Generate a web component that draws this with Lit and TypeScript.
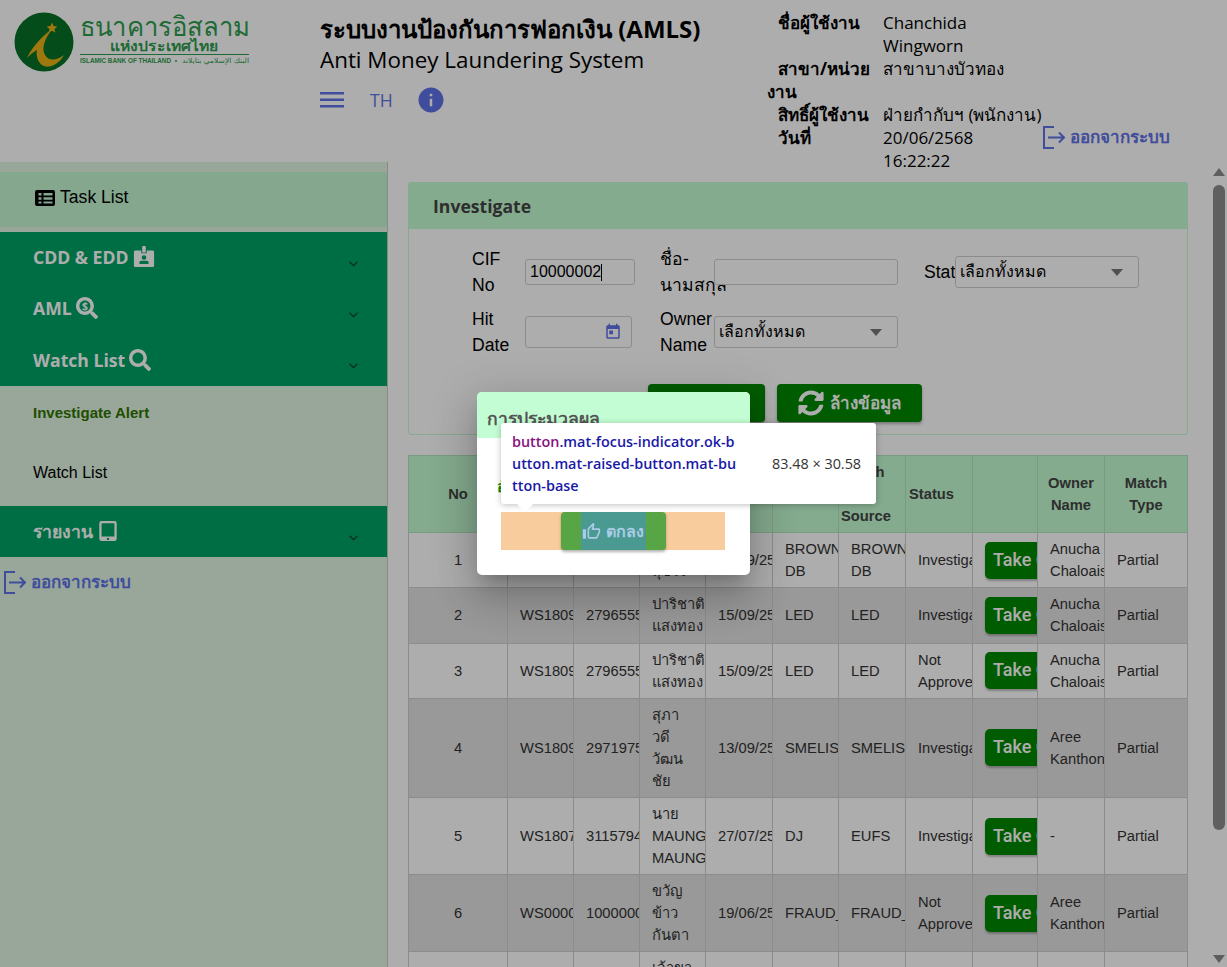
import { LitElement, html, css, svg } from "lit";
import { customElement } from "lit/decorators.js";

const searchPath = "M505 442.7L405.3 343c-4.5-4.5-10.6-7-17-7H372c27.6-35.3 44-79.7 44-128C416 93.1 322.9 0 208 0S0 93.1 0 208s93.1 208 208 208c48.3 0 92.7-16.4 128-44v16.3c0 6.4 2.5 12.5 7 17l99.7 99.7c9.4 9.4 24.6 9.4 33.9 0l28.3-28.3c9.4-9.4 9.4-24.6.1-34zM208 336c-70.7 0-128-57.2-128-128 0-70.7 57.2-128 128-128 70.7 0 128 57.2 128 128 0 70.7-57.2 128-128 128z";
const syncPath = "M370.72 133.28C339.458 104.008 298.888 87.962 255.848 88c-77.458.068-144.328 53.178-162.791 126.85-1.344 5.363-6.122 9.15-11.651 9.15H24.103c-7.498 0-13.194-6.807-11.807-14.176C33.933 94.924 134.813 8 256 8c66.448 0 126.791 26.136 171.315 68.685L463.03 40.97C478.149 25.851 504 36.559 504 57.941V192c0 13.255-10.745 24-24 24H345.941c-21.382 0-32.09-25.851-16.971-40.971l41.75-41.749zM32 296h134.059c21.382 0 32.09 25.851 16.971 40.971l-41.75 41.75c31.262 29.273 71.835 45.319 114.876 45.28 77.418-.07 144.315-53.144 162.787-126.849 1.344-5.363 6.122-9.15 11.651-9.15h57.304c7.498 0 13.194 6.807 11.807 14.176C478.067 417.076 377.187 504 256 504c-66.448 0-126.791-26.136-171.315-68.685L48.97 471.03C33.851 486.149 8 475.441 8 454.059V320c0-13.255 10.745-24 24-24z";

const logoutIcon = html`<svg class="logout-icon" viewBox="0 0 24 24" fill="none" stroke="currentColor" stroke-width="2">
  <path d="M12 2H2v21h10" />
  <path d="M6 12.5h16M17 7.5l5 5-5 5" />
</svg>`;

const chevron = html`<svg class="chevron" viewBox="0 0 8 5" fill="none" stroke="#1c3d1c" stroke-width="1"><path d="M.5.5 4 4 7.5.5" /></svg>`;

interface Row {
  no: string;
  alert: string;
  cif: string;
  name: string[];
  date: string;
  list: string[];
  source: string[];
  status: string[];
  owner: string[];
}

const rows: Row[] = [
  { no: "1", alert: "WS18090001", cif: "2796555001", name: ["ปาริชาติ", "สุขใจ"], date: "15/09/2568", list: ["BROWN", "DB"], source: ["BROWN", "DB"], status: ["Investigate"], owner: ["Anucha", "Chaloaisin"] },
  { no: "2", alert: "WS18090002", cif: "2796555001", name: ["ปาริชาติ", "แสงทอง"], date: "15/09/2568", list: ["LED"], source: ["LED"], status: ["Investigate"], owner: ["Anucha", "Chaloaisin"] },
  { no: "3", alert: "WS18090003", cif: "2796555001", name: ["ปาริชาติ", "แสงทอง"], date: "15/09/2568", list: ["LED"], source: ["LED"], status: ["Not", "Approved"], owner: ["Anucha", "Chaloaisin"] },
  { no: "4", alert: "WS18090004", cif: "2971975001", name: ["สุภา", "วดี", "วัฒน", "ชัย"], date: "13/09/2568", list: ["SMELIST"], source: ["SMELIST"], status: ["Investigate"], owner: ["Aree", "Kanthong"] },
  { no: "5", alert: "WS18070005", cif: "3115794001", name: ["นาย", "MAUNG", "MAUNG"], date: "27/07/2568", list: ["DJ"], source: ["EUFS"], status: ["Investigate"], owner: ["-"] },
  { no: "6", alert: "WS00000006", cif: "1000000201", name: ["ขวัญ", "ข้าว", "กันตา"], date: "19/06/2568", list: ["FRAUD_LIST"], source: ["FRAUD_LIST"], status: ["Not", "Approved"], owner: ["Aree", "Kanthong"] },
  { no: "7", alert: "WS00000007", cif: "1000000301", name: ["เจ้าขา", "ใจดี", "มาก"], date: "19/06/2568", list: ["UR", "DB"], source: ["UR", "DB"], status: ["Investigate"], owner: ["Aree", "Kanthong"] },
];

const colWidths = [99, 66, 66, 66, 67, 66, 67, 67, 65, 67, 83];

@customElement("app-root")
export class AppRoot extends LitElement {
  static styles = css`
    :host {
      display: block;
      position: relative;
      width: 1227px;
      height: 967px;
      overflow: hidden;
      background: #fff;
      color: #000;
      font-family: "Liberation Sans", "Noto Sans", sans-serif;
      font-size: 14.72px;
    }
    * { box-sizing: border-box; }

    /* header */
    .top {
      display: grid;
      grid-template-columns: 306px 447px 275px 1fr;
      height: 162px;
      padding-left: 14px;
    }
    .logo { display: block; margin-top: 11px; }
    .title-box { padding-top: 10px; }
    .title { font: 700 24px/38px "Open Sans", "Noto Sans", sans-serif; white-space: nowrap; }
    .subtitle { font: 400 22.4px/28px "Open Sans", "Noto Sans", sans-serif; white-space: nowrap; margin-top: -2px; }
    .tools { display: flex; align-items: center; margin-top: 11px; color: #5f72e6; }
    .tools .burger { width: 24px; height: 16px; margin-right: 26px; }
    .tools .lang { font: 400 17.6px/26px "Open Sans", sans-serif; width: 49px; }
    .tools .info { width: 30px; height: 30px; margin-left: -3px; }
    .user {
      display: grid;
      grid-template-columns: 116px 1fr;
      align-content: start;
      padding-top: 11px;
      font: 400 17px/23px "Open Sans", "Noto Sans", sans-serif;
    }
    .user b { font-weight: 700; text-indent: 11px; }
    .logout {
      display: flex;
      align-items: center;
      gap: 4px;
      color: #5f72e6;
      font: 600 17px/24px "Open Sans", "Noto Sans", sans-serif;
      white-space: nowrap;
    }
    .top .logout { align-self: end; margin-bottom: 23px; }
    .logout-icon { width: 24px; height: 24px; flex: none; }

    /* side menu + main */
    .body { display: flex; height: 805px; }
    .side {
      width: 388px;
      flex: none;
      padding-top: 10px;
      background: #e0f7e4;
      border-right: 1px solid #c4cfc6;
    }
    .task {
      display: flex;
      align-items: center;
      gap: 5px;
      height: 55px;
      margin-bottom: 5px;
      padding: 0 0 4px 35px;
      background: #c3f7d1;
      font-size: 17.6px;
    }
    .task svg { width: 20px; height: 18px; }
    .menu {
      display: flex;
      align-items: center;
      height: 51.3px;
      padding: 0 29px 0 33px;
      background: #00a365;
      color: #fff;
      font: 700 17.6px/24px "Open Sans", "Noto Sans", sans-serif;
    }
    .menu .label { display: flex; align-items: center; gap: 4px; margin-top: -1px; }
    .menu .label svg { display: block; height: 22px; width: 22px; fill: currentColor; }
    .chevron { width: 9px; height: 6px; margin-left: auto; margin-top: 12px; }
    .sub {
      display: flex;
      align-items: center;
      height: 60px;
      padding: 0 33px 6px;
      font-size: 16px;
    }
    .sub.active { font-size: 15px; font-weight: 700; color: #327300; }
    .side .logout { padding: 13px 0 0 3px; }

    .main { flex: 1; display: flex; overflow: hidden; padding-left: 20px; }
    .content { width: 780px; flex: none; padding-top: 20px; }
    .rail {
      width: 17px;
      margin-left: 22px;
      flex: none;
      display: flex;
      flex-direction: column;
      align-items: center;
      padding: 6px 0 4px;
    }
    .rail .up, .rail .down { width: 0; height: 0; border: 6px solid transparent; flex: none; }
    .rail .up { border-top: 0; border-bottom: 8px solid #8b8b8b; }
    .rail .down { border-bottom: 0; border-top: 8px solid #8b8b8b; margin-top: auto; }
    .rail .thumb { width: 12px; height: 645px; margin-top: 9px; border-radius: 6px; background: #8c8c8c; }

    /* search card */
    .card { height: 253px; border: 1px solid #c3fcd1; border-radius: 3px; }
    .card-head {
      height: 46px;
      padding-left: 24px;
      background: #c3fcd1;
      color: #444;
      font: 700 17.6px/46px "Open Sans", "Noto Sans", sans-serif;
    }
    .form {
      display: grid;
      grid-template-columns: 53px 135px 54px 210px 31px 184px;
      grid-auto-rows: 52px;
      row-gap: 8px;
      align-items: center;
      margin-top: 17px;
      padding-left: 63px;
      font-size: 17.6px;
      line-height: 26.4px;
    }
    .form label { white-space: nowrap; }
    .field {
      position: relative;
      display: flex;
      align-items: center;
      padding: 0 4px;
      border: 1px solid #cfcfcf;
      border-radius: 3px;
      background: #fff;
      font-size: 16px;
      white-space: nowrap;
    }
    .field.short { height: 26px; }
    .field.tall { height: 32px; }
    .w110 { width: 110px; }
    .w107 { width: 107px; }
    .w184 { width: 184px; }
    .caret { width: 1px; height: 17px; background: #000; }
    .arrow {
      margin-left: auto;
      margin-right: 11px;
      width: 0;
      height: 0;
      border: 6px solid transparent;
      border-bottom: 0;
      border-top: 7px solid #777;
    }
    .date { margin-left: auto; margin-right: 5px; width: 18px; height: 18px; fill: #5f72e6; }
    .actions { display: flex; justify-content: flex-start; gap: 12px; margin-top: 26px; padding-left: 239px; }
    .btn {
      display: flex;
      align-items: center;
      justify-content: center;
      gap: 6px;
      height: 38px;
      border-radius: 4px;
      background: #008800;
      color: #fff;
      font: 700 17px/24px "Open Sans", "Noto Sans", sans-serif;
      box-shadow: 0 2px 3px rgba(0, 0, 0, .3);
    }
    .btn svg { width: 26px; height: 26px; fill: currentColor; }
    .btn.search { width: 117px; }
    .btn.clear { width: 145px; }

    /* table */
    table {
      table-layout: fixed;
      width: 780px;
      margin-top: 20px;
      border-collapse: collapse;
      line-height: 22.08px;
      color: #333;
    }
    th, td { border: 1px solid #cfcfcf; overflow: hidden; padding: 5px 0 5px 12px; text-align: left; white-space: nowrap; }
    th { background: #c3fcd1; font-weight: 700; color: #444; border-color: #b4e4c0; }
    th.mid, td.mid { text-align: center; padding-left: 0; }
    tbody tr:nth-child(even) td { background: #e2e2e2; }
    .take {
      display: inline-block;
      vertical-align: middle;
      height: 37px;
      padding: 0 8px;
      border-radius: 5px;
      background: #008800;
      color: #fff;
      font: 500 18px/36px Roboto, sans-serif;
      box-shadow: 0 2px 2px rgba(0, 0, 0, .25);
    }

    /* dim layer, dialog and inspector tooltip */
    .dim { position: absolute; inset: 0; background: rgba(0, 0, 0, .32); }
    .dialog {
      position: absolute;
      left: 477px;
      top: 392px;
      width: 273px;
      height: 183px;
      overflow: hidden;
      border-radius: 5px;
      background: #fff;
      box-shadow: 0 11px 15px -7px rgba(0, 0, 0, .2), 0 24px 38px 3px rgba(0, 0, 0, .14), 0 9px 46px 8px rgba(0, 0, 0, .12);
    }
    .dialog-head {
      height: 46px;
      padding-left: 10px;
      background: #c3fdd3;
      color: #555;
      font: 700 17.6px/52px "Open Sans", "Noto Sans", sans-serif;
    }
    .dialog-text { height: 74px; padding: 36px 0 0 20px; color: #0a8a0a; font: 700 16px/24px "Open Sans", "Noto Sans", sans-serif; white-space: nowrap; }
    .dialog-band { display: flex; justify-content: center; width: 224px; height: 38px; margin-left: 24px; background: #f9cc9d; }
    .ok {
      display: flex;
      align-items: center;
      justify-content: center;
      width: 105px;
      height: 38px;
      border-radius: 4px;
      background: #57a545;
      box-shadow: 0 2px 3px rgba(0, 0, 0, .3);
    }
    .ok-inner {
      display: flex;
      align-items: center;
      justify-content: center;
      gap: 5px;
      width: 65px;
      height: 38px;
      background: #4b9a92;
      color: #a9cde6;
      font: 600 16px/24px "Open Sans", "Noto Sans", sans-serif;
      white-space: nowrap;
    }
    .ok-inner svg { width: 19px; height: 19px; flex: none; fill: currentColor; }
    .tip {
      position: absolute;
      left: 501px;
      top: 423px;
      display: flex;
      align-items: center;
      width: 375px;
      height: 81px;
      padding: 0 11px;
      border-radius: 3px;
      background: #fff;
      box-shadow: 0 1px 6px rgba(0, 0, 0, .25);
      font: 600 14.4px/22px "Open Sans", sans-serif;
      color: #1a1aa6;
    }
    .tip-name { width: 260px; flex: none; white-space: nowrap; }
    .tip-name i { font-style: normal; color: #881280; }
    .tip-size { color: #333; font-weight: 400; white-space: nowrap; }
    .tip::after {
      content: "";
      position: absolute;
      left: 15px;
      bottom: -8px;
      width: 0;
      height: 0;
      border: 9px solid transparent;
      border-bottom: 0;
      border-top: 9px solid #fff;
    }
  `;

  private logo() {
    return svg`<svg class="logo" width="240" height="62" viewBox="0 0 240 62">
      <circle cx="30" cy="31" r="29.5" fill="#077125" />
      <path d="M39 17C29 25 19 34 13 47 18 42 21 40 23 39 21 49 28 60 40 54 46 51 48 47 50 44 44 49 35 51 31 44 27 37 31 27 39 17Z" fill="#e9b117" />
      <path d="M38 11.500l1.600 3.500 3.700.4-2.800 2.500.8 3.700-3.300-1.900-3.300 1.900.8-3.700-2.800-2.500 3.700-.4z" fill="#e9b117" />
      <text x="66" y="25" textLength="170" lengthAdjust="spacingAndGlyphs" font-size="27" font-weight="500" fill="#2e9c4e" font-family="Noto Sans, sans-serif">ธนาคารอิสลาม</text>
      <text x="96" y="40" textLength="108" lengthAdjust="spacingAndGlyphs" font-size="14" font-weight="700" fill="#2e9c4e" font-family="Noto Sans, sans-serif">แห่งประเทศไทย</text>
      <path d="M66 43.500h169" stroke="#2e9c4e" stroke-width="1" />
      <text x="66" y="52" textLength="91" lengthAdjust="spacingAndGlyphs" font-size="7" font-weight="700" fill="#2e9c4e" font-family="Liberation Sans, sans-serif">ISLAMIC BANK OF THAILAND</text>
      <circle cx="162" cy="50" r="1" fill="#2e9c4e" />
      <text x="168" y="52" textLength="67" lengthAdjust="spacingAndGlyphs" font-size="7" fill="#2e9c4e" font-family="DejaVu Sans, sans-serif">البنك الإسلامي بتايلاند</text>
    </svg>`;
  }

  private lines(parts: string[]) {
    return parts.map((p, i) => html`${i ? html`<br />` : ""}${p}`);
  }

  render() {
    return html`
      <div class="top">
        ${this.logo()}
        <div class="title-box">
          <div class="title">ระบบงานป้องกันการฟอกเงิน (AMLS)</div>
          <div class="subtitle">Anti Money Laundering System</div>
          <div class="tools">
            <svg class="burger" viewBox="0 0 24 16" fill="currentColor"><rect width="24" height="2.500" /><rect y="6.500" width="24" height="2.500" /><rect y="13" width="24" height="2.500" /></svg>
            <span class="lang">TH</span>
            <svg class="info" viewBox="0 0 24 24" fill="currentColor"><path d="M12 2C6.480 2 2 6.480 2 12s4.480 10 10 10 10-4.480 10-10S17.520 2 12 2zm1 15h-2v-6h2v6zm0-8h-2V7h2v2z" /></svg>
          </div>
        </div>
        <div class="user">
          <b>ชื่อผู้ใช้งาน</b><span>Chanchida Wingworn</span>
          <b>สาขา/หน่วยงาน</b><span>สาขาบางบัวทอง</span>
          <b>สิทธิ์ผู้ใช้งาน</b><span>ฝ่ายกำกับฯ (พนักงาน)</span>
          <b>วันที่</b><span>20/06/2568<br />16:22:22</span>
        </div>
        <div class="logout">${logoutIcon}ออกจากระบบ</div>
      </div>

      <div class="body">
        <nav class="side">
          <div class="task">
            <svg viewBox="0 0 20 18" fill="#000"><path fill-rule="evenodd" d="M2 1h16a2 2 0 0 1 2 2v12a2 2 0 0 1-2 2H2a2 2 0 0 1-2-2V3a2 2 0 0 1 2-2zm1.500 3v2.500h3V4zm5 0v2.500h9V4zm-5 4.200v2.500h3V8.200zm5 0v2.500h9V8.200zm-5 4.200v2h3v-2zm5 0v2h9v-2z" /></svg>
            Task List
          </div>
          <div class="menu">
            <span class="label">CDD &amp; EDD
              <svg viewBox="0 0 24 24"><path fill-rule="evenodd" d="M10 1.500a2 2 0 0 1 4 0V7h-4zM2.500 5H9v3h6V5h6.500A1.500 1.500 0 0 1 23 6.500v15a1.500 1.500 0 0 1-1.500 1.500h-19A1.500 1.500 0 0 1 1 21.500v-15A1.500 1.500 0 0 1 2.500 5zM12 10a2.500 2.500 0 1 0 0 5 2.500 2.500 0 0 0 0-5zm-5 9.500h10V18a2 2 0 0 0-2-2H9a2 2 0 0 0-2 2z" /></svg>
            </span>${chevron}
          </div>
          <div class="menu">
            <span class="label">AML
              <svg viewBox="0 0 512 512"><path d="${searchPath}" /><text x="208" y="296" text-anchor="middle" font-size="240" font-weight="700" font-family="Open Sans, sans-serif">$</text></svg>
            </span>${chevron}
          </div>
          <div class="menu">
            <span class="label">Watch List
              <svg viewBox="0 0 512 512"><path d="${searchPath}" /></svg>
            </span>${chevron}
          </div>
          <div class="sub active">Investigate Alert</div>
          <div class="sub">Watch List</div>
          <div class="menu">
            <span class="label">รายงาน
              <svg viewBox="0 0 20 24"><path fill-rule="evenodd" d="M3 1h14a2.500 2.500 0 0 1 2.500 2.500v17A2.500 2.500 0 0 1 17 23H3A2.500 2.500 0 0 1 .5 20.500v-17A2.500 2.500 0 0 1 3 1zm0 2.500V18h14V3.500zM10 19.300a1.300 1.300 0 1 0 0 2.600 1.300 1.300 0 0 0 0-2.600z" /></svg>
            </span>${chevron}
          </div>
          <div class="logout">${logoutIcon}ออกจากระบบ</div>
        </nav>

        <main class="main">
          <div class="content">
            <section class="card">
              <div class="card-head">Investigate</div>
              <div class="form">
                <label>CIF<br />No</label>
                <div class="field short w110">10000002<span class="caret"></span></div>
                <label>ชื่อ-<br />นามสกุล</label>
                <div class="field short w184"></div>
                <label>Status</label>
                <div class="field tall w184">เลือกทั้งหมด<span class="arrow"></span></div>
                <label>Hit<br />Date</label>
                <div class="field tall w107">
                  <svg class="date" viewBox="0 0 24 24"><path d="M19 3h-1V1h-2v2H8V1H6v2H5c-1.110 0-1.990.9-1.990 2L3 19c0 1.100.89 2 2 2h14c1.100 0 2-.9 2-2V5c0-1.100-.9-2-2-2zm0 16H5V8h14v11zM7 10h5v5H7z" /></svg>
                </div>
                <label>Owner<br />Name</label>
                <div class="field tall w184">เลือกทั้งหมด<span class="arrow"></span></div>
              </div>
              <div class="actions">
                <div class="btn search">ค้นหา</div>
                <div class="btn clear"><svg viewBox="0 0 512 512"><path d="${syncPath}" /></svg>ล้างข้อมูล</div>
              </div>
            </section>

            <table>
              <colgroup>${colWidths.map((w) => html`<col style="width:${w}px" />`)}</colgroup>
              <thead>
                <tr>
                  <th class="mid">No</th>
                  <th class="mid">Alert</th>
                  <th class="mid">CIF</th>
                  <th class="mid">ชื่อ</th>
                  <th class="mid">Hit Date</th>
                  <th class="mid">List</th>
                  <th style="padding-left:2px">Watch<br />List<br />Source</th>
                  <th style="padding-left:3px">Status</th>
                  <th></th>
                  <th class="mid">Owner<br />Name</th>
                  <th class="mid">Match<br />Type</th>
                </tr>
              </thead>
              <tbody>
                ${rows.map(
                  (r) => html`<tr>
                    <td class="mid">${r.no}</td>
                    <td>${r.alert}</td>
                    <td>${r.cif}</td>
                    <td>${this.lines(r.name)}</td>
                    <td>${r.date}</td>
                    <td>${this.lines(r.list)}</td>
                    <td>${this.lines(r.source)}</td>
                    <td>${this.lines(r.status)}</td>
                    <td><span class="take">Take Case</span></td>
                    <td>${this.lines(r.owner)}</td>
                    <td>Partial</td>
                  </tr>`
                )}
              </tbody>
            </table>
          </div>
          <div class="rail">
            <span class="up"></span>
            <span class="thumb"></span>
            <span class="down"></span>
          </div>
        </main>
      </div>

      <div class="dim"></div>

      <div class="dialog">
        <div class="dialog-head">การประมวลผล</div>
        <div class="dialog-text">อัปเดตข้อมูลเรียบร้อย</div>
        <div class="dialog-band">
          <div class="ok">
            <div class="ok-inner">
              <svg viewBox="0 0 24 24"><path d="M9 21h9c.83 0 1.540-.5 1.840-1.220l3.020-7.050c.09-.23.14-.47.14-.73v-2c0-1.100-.9-2-2-2h-6.310l.95-4.570.03-.32c0-.41-.17-.79-.44-1.060L14.170 1 7.580 7.590C7.220 7.950 7 8.450 7 9v10c0 1.100.9 2 2 2zM9 9l4.340-4.340L12 10h9v2l-3 7H9V9zM1 9h4v12H1z" /></svg>
              ตกลง
            </div>
          </div>
        </div>
      </div>

      <div class="tip">
        <div class="tip-name"><i>button</i>.mat-focus-indicator.ok-b<br />utton.mat-raised-button.mat-bu<br />tton-base</div>
        <div class="tip-size">83.48 × 30.58</div>
      </div>
    `;
  }
}
